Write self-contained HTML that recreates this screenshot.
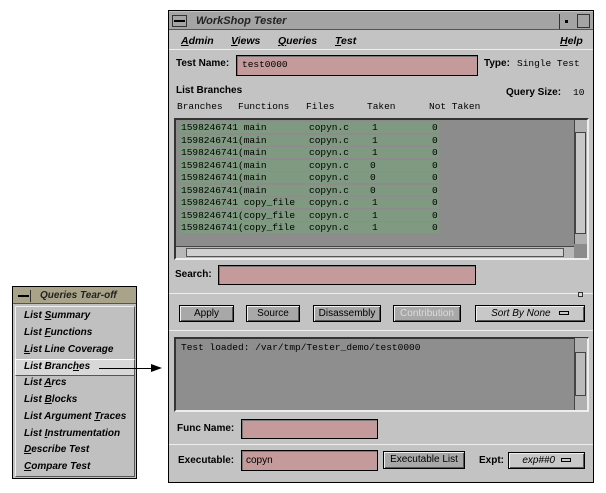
<!DOCTYPE html>
<html><head><style>
*{box-sizing:border-box;margin:0;padding:0}
body{width:606px;height:493px;background:#fff;position:relative;overflow:hidden;font-family:"Liberation Sans",sans-serif;font-size:10px;color:#000}
.a{position:absolute}
.b{font-weight:bold}
.i{font-style:italic;font-weight:bold}
.m{font-family:"Liberation Mono",monospace;font-size:9.5px}
.fld{position:absolute;background:#c49a9a;border:1px solid #000;box-shadow:inset 1px 1px 0 #777}
.btn{position:absolute;background:#a8a8a8;border:1px solid #000;box-shadow:inset 1px 1px 0 #eee,inset -1px -1px 0 #555;text-align:center;font-size:10px;line-height:15px}
.row{position:absolute;left:180px;width:259px;height:11px;background:#7f9a80;line-height:11px}
.sep{position:absolute;height:1px;background:#888;border-bottom:1px solid #eee}
.it{position:absolute;left:24px;font-style:italic;font-weight:bold;font-size:10px}
</style></head><body>
<!-- main window -->
<div class="a" style="left:168px;top:10px;width:426px;height:473px;background:#c3c3c3;border:1px solid #000"></div>
<div class="a" style="left:169px;top:12px;width:424px;height:18px;background:#a4a4a4;border-bottom:1px solid #555"></div>
<div class="a" style="left:172px;top:15px;width:15px;height:12px;border:1px solid #333"></div>
<div class="a" style="left:174px;top:20px;width:11px;height:2px;background:#000"></div>
<div class="a i" style="left:196px;top:15px;font-size:11px;color:#222">WorkShop Tester</div>
<div class="a" style="left:559px;top:14px;width:1px;height:15px;background:#333"></div>
<div class="a" style="left:565px;top:20px;width:3px;height:3px;background:#000"></div>
<div class="a" style="left:577px;top:14px;width:13px;height:14px;border:1px solid #333"></div>
<div class="a i" style="left:181px;top:35px;font-size:10.5px"><u>A</u>dmin</div>
<div class="a i" style="left:231px;top:35px;font-size:10.5px"><u>V</u>iews</div>
<div class="a i" style="left:278px;top:35px;font-size:10.5px"><u>Q</u>ueries</div>
<div class="a i" style="left:335px;top:35px;font-size:10.5px"><u>T</u>est</div>
<div class="a i" style="left:560px;top:35px;font-size:10.5px"><u>H</u>elp</div>
<div class="sep" style="left:169px;top:49px;width:424px"></div>
<div class="a b" style="left:176px;top:58px">Test Name:</div>
<div class="fld" style="left:236px;top:55px;width:242px;height:21px"></div>
<div class="a m" style="left:242px;top:59px">test0000</div>
<div class="a b" style="left:484px;top:58px">Type:</div>
<div class="a m" style="left:517px;top:58px">Single Test</div>
<div class="a b" style="left:176px;top:85px">List Branches</div>
<div class="a b" style="left:506px;top:87px">Query Size:</div>
<div class="a m" style="left:573px;top:87px">10</div>
<div class="a m" style="left:177px;top:101px">Branches</div>
<div class="a m" style="left:238px;top:101px">Functions</div>
<div class="a m" style="left:306px;top:101px">Files</div>
<div class="a m" style="left:367px;top:101px">Taken</div>
<div class="a m" style="left:429px;top:101px">Not Taken</div>
<div class="a" style="left:174px;top:118px;width:415px;height:142px;background:#8c8c8c;border:2px solid #333;border-right-color:#eee;border-bottom-color:#eee"></div>
<div class="row m" style="top:122px"><span style="position:absolute;left:1px">1598246741 main</span><span style="position:absolute;left:129px">copyn.c</span><span style="position:absolute;left:192px">1</span><span style="position:absolute;left:252px">0</span></div>
<div class="row m" style="top:134.5px"><span style="position:absolute;left:1px">1598246741(main</span><span style="position:absolute;left:129px">copyn.c</span><span style="position:absolute;left:192px">1</span><span style="position:absolute;left:252px">0</span></div>
<div class="row m" style="top:147px"><span style="position:absolute;left:1px">1598246741(main</span><span style="position:absolute;left:129px">copyn.c</span><span style="position:absolute;left:192px">1</span><span style="position:absolute;left:252px">0</span></div>
<div class="row m" style="top:159.5px"><span style="position:absolute;left:1px">1598246741(main</span><span style="position:absolute;left:129px">copyn.c</span><span style="position:absolute;left:190px">0</span><span style="position:absolute;left:252px">0</span></div>
<div class="row m" style="top:172px"><span style="position:absolute;left:1px">1598246741(main</span><span style="position:absolute;left:129px">copyn.c</span><span style="position:absolute;left:190px">0</span><span style="position:absolute;left:252px">0</span></div>
<div class="row m" style="top:184.5px"><span style="position:absolute;left:1px">1598246741(main</span><span style="position:absolute;left:129px">copyn.c</span><span style="position:absolute;left:190px">0</span><span style="position:absolute;left:252px">0</span></div>
<div class="row m" style="top:197px"><span style="position:absolute;left:1px">1598246741 copy_file</span><span style="position:absolute;left:129px">copyn.c</span><span style="position:absolute;left:192px">1</span><span style="position:absolute;left:252px">0</span></div>
<div class="row m" style="top:209.5px"><span style="position:absolute;left:1px">1598246741(copy_file</span><span style="position:absolute;left:129px">copyn.c</span><span style="position:absolute;left:192px">1</span><span style="position:absolute;left:252px">0</span></div>
<div class="row m" style="top:222px"><span style="position:absolute;left:1px">1598246741(copy_file</span><span style="position:absolute;left:129px">copyn.c</span><span style="position:absolute;left:192px">1</span><span style="position:absolute;left:252px">0</span></div>
<div class="a" style="left:574px;top:120px;width:13px;height:124px;background:#b0b0b0;border-left:1px solid #444"></div>
<div class="a" style="left:575px;top:132px;width:11px;height:102px;background:#c8c8c8;border:1px solid #444"></div>
<div class="a" style="left:176px;top:246px;width:398px;height:12px;background:#b8b8b8;border-top:1px solid #444"></div>
<div class="a" style="left:186px;top:248px;width:378px;height:9px;background:#d0d0d0;border:1px solid #555"></div>
<div class="a b" style="left:175px;top:269px">Search:</div>
<div class="fld" style="left:218px;top:265px;width:258px;height:20px"></div>
<div class="sep" style="left:169px;top:293px;width:424px"></div>
<div class="a" style="left:578px;top:292px;width:5px;height:5px;border:1px solid #333;background:#ddd"></div>
<div class="btn" style="left:179px;top:305px;width:55px;height:17px">Apply</div>
<div class="btn" style="left:246px;top:305px;width:54px;height:17px">Source</div>
<div class="btn" style="left:313px;top:305px;width:68px;height:17px">Disassembly</div>
<div class="btn" style="left:393px;top:305px;width:68px;height:17px;color:#ddd">Contribution</div>
<div class="btn" style="left:475px;top:305px;width:110px;height:17px;background:#c8c8c8;font-style:italic">Sort By None &nbsp;&nbsp;<span style="display:inline-block;width:10px;height:4px;border:1px solid #000;vertical-align:middle"></span></div>
<div class="sep" style="left:169px;top:330px;width:424px"></div>
<div class="a" style="left:174px;top:337px;width:415px;height:75px;background:#8e8e8e;border:2px solid #333;border-right-color:#eee;border-bottom-color:#eee"></div>
<div class="a m" style="left:181px;top:342px">Test loaded: /var/tmp/Tester_demo/test0000</div>
<div class="a" style="left:574px;top:338px;width:13px;height:72px;background:#b0b0b0;border-left:1px solid #444"></div>
<div class="a" style="left:575px;top:352px;width:11px;height:44px;background:#bbb;border:1px solid #444"></div>
<div class="a b" style="left:177px;top:423px">Func Name:</div>
<div class="fld" style="left:241px;top:419px;width:137px;height:20px"></div>
<div class="sep" style="left:169px;top:444px;width:424px"></div>
<div class="a b" style="left:178px;top:455px">Executable:</div>
<div class="fld" style="left:241px;top:450px;width:137px;height:21px"></div>
<div class="a" style="left:246px;top:455px;font-size:10px">copyn</div>
<div class="btn" style="left:383px;top:451px;width:82px;height:18px;line-height:16px">Executable List</div>
<div class="a b" style="left:479px;top:455px">Expt:</div>
<div class="btn" style="left:508px;top:452px;width:77px;height:17px;background:#c8c8c8;font-style:italic">exp##0 &nbsp;<span style="display:inline-block;width:10px;height:4px;border:1px solid #000;vertical-align:middle"></span></div>
<!-- tear-off -->
<div class="a" style="left:12px;top:286px;width:125px;height:193px;background:#c0c0c0;border:1px solid #000"></div>
<div class="a" style="left:13px;top:287px;width:123px;height:17px;background:#a9a489;border-bottom:1px solid #555"></div>
<div class="a" style="left:16px;top:290px;width:15px;height:12px;border-right:1px solid #333"></div>
<div class="a" style="left:18px;top:295px;width:11px;height:2px;background:#000"></div>
<div class="a i" style="left:40px;top:290px;font-size:10px;color:#222">Queries Tear-off</div>
<div class="a" style="left:15px;top:306px;width:120px;height:171px;border:1px solid #eee;border-right-color:#555;border-bottom-color:#555"></div>
<div class="it" style="top:310px">List <u>S</u>ummary</div>
<div class="it" style="top:327px">List <u>F</u>unctions</div>
<div class="it" style="top:344px"><u>L</u>ist Line Coverage</div>
<div class="a" style="left:15px;top:359px;width:120px;height:17px;background:#d8d8d8;border:1px solid #555;border-left-color:#fff;border-top-color:#fff"></div>
<div class="it" style="top:361px">List Branc<u>h</u>es</div>
<div class="it" style="top:377px">List <u>A</u>rcs</div>
<div class="it" style="top:394px">List <u>B</u>locks</div>
<div class="it" style="top:411px">List Argument <u>T</u>races</div>
<div class="it" style="top:428px">List <u>I</u>nstrumentation</div>
<div class="it" style="top:444px"><u>D</u>escribe Test</div>
<div class="it" style="top:461px"><u>C</u>ompare Test</div>
<div class="a" style="left:99px;top:368px;width:52px;height:1px;background:#000"></div>
<div class="a" style="left:151px;top:364px;width:0;height:0;border-left:11px solid #000;border-top:4px solid transparent;border-bottom:4px solid transparent"></div>
</body></html>
